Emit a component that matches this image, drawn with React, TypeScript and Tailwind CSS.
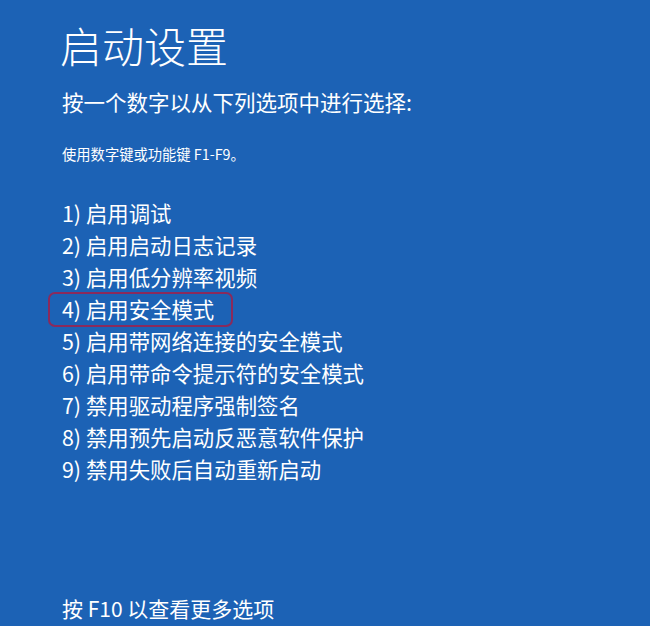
const items = [
  "1) 启用调试",
  "2) 启用启动日志记录",
  "3) 启用低分辨率视频",
  "4) 启用安全模式",
  "5) 启用带网络连接的安全模式",
  "6) 启用带命令提示符的安全模式",
  "7) 禁用驱动程序强制签名",
  "8) 禁用预先启动反恶意软件保护",
  "9) 禁用失败后自动重新启动",
];

export default function App() {
  return (
    <div
      className="w-[650px] h-[626px] overflow-hidden bg-[#1c62b5] text-white pl-[60px] pt-[20px]"
      style={{ fontFamily: '"Noto Sans CJK SC", "Noto Sans", sans-serif' }}
    >
      <h1 className="text-[42px] leading-[50px] font-light">启动设置</h1>
      <p className="mt-[17px] text-[21.5px] leading-[30px] pl-[2px]">按一个数字以从下列选项中进行选择:</p>
      <p className="mt-[27px] text-[14.3px] leading-[20px] pl-[2px]">使用数字键或功能键 F1-F9。</p>
      <ul className="mt-[33px] pl-[2px]">
        {items.map((item, i) => (
          <li key={i} className="text-[21.4px] leading-[32px]">
            {i === 3 ? (
              <span className="relative inline-block">
                {item}
                <span className="absolute -left-[14px] -right-[19px] -top-[1px] -bottom-[2px] border-[2.5px] border-[#8a2a5c] rounded-[7px]" />
              </span>
            ) : (
              item
            )}
          </li>
        ))}
      </ul>
      <p className="mt-[108px] text-[21px] leading-[30px] pl-[2px]">按 F10 以查看更多选项</p>
    </div>
  );
}
